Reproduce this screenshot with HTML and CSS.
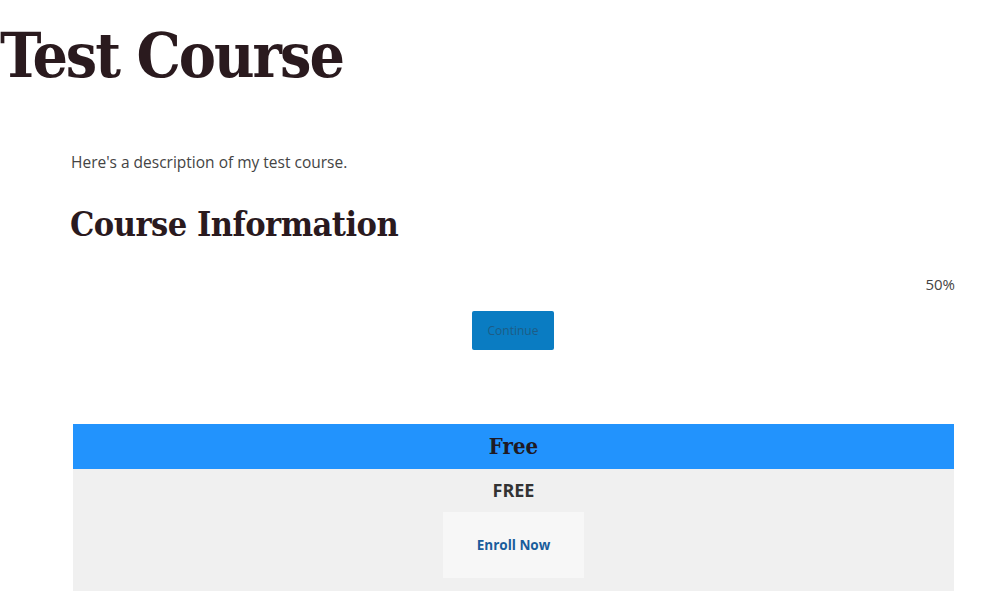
FILE: index.html
```html
<!DOCTYPE html>
<html>
<head>
<meta charset="utf-8">
<link rel="stylesheet" href="styles.css">
</head>
<body>
<h1 class="title">Test Course</h1>
<div class="content">
  <p class="desc">Here's a description of my test course.</p>
  <h2 class="section">Course Information</h2>
  <div class="progress">50%</div>
  <div class="continue-row"><a class="btn-continue">Continue</a></div>
  <div class="pricing">
    <div class="plan-head">Free</div>
    <div class="plan-body">
      <div class="price">FREE</div>
      <a class="enroll">Enroll Now</a>
    </div>
  </div>
</div>
</body>
</html>
```
FILE: styles.css
```css
html, body { margin: 0; padding: 0; background: #fff; }
body { font-family: "Open Sans", Lato, sans-serif; color: #444; width: 1000px; height: 605px; overflow: hidden; }
.title {
  margin: 0; padding-top: 20px;
  font-family: "DejaVu Serif", serif; font-weight: bold; font-stretch: condensed;
  font-size: 62px; line-height: 72px; color: #2a1a1e;
  letter-spacing: -2px;
}
.content { padding: 0 45px 0 71px; }
.desc { margin: 60px 0 0; font-size: 15.5px; line-height: 20px; color: #444; }
.section {
  margin: 32px 0 0 -1px;
  font-family: "DejaVu Serif", serif; font-weight: bold; font-stretch: condensed;
  font-size: 34px; line-height: 40px; color: #2a1a1e; letter-spacing: -0.5px;
}
.progress { margin-top: 30px; text-align: right; font-size: 15px; line-height: 20px; color: #444; }
.continue-row { display: flex; justify-content: center; margin-top: 17px; }
.btn-continue {
  display: block; width: 82px; height: 39px; box-sizing: border-box;
  background: #0a7cc2; border-radius: 2px; color: #1d5c86;
  font-size: 12px; line-height: 39px; text-align: center;
}
.pricing { margin-top: 74px; margin-left: 2px; width: 881px; }
.plan-head {
  background: #2293fd; height: 45px; line-height: 45px; text-align: center;
  font-family: "DejaVu Serif", serif; font-weight: bold; font-stretch: condensed; font-size: 22px; color: #1f1a24;
}
.plan-body { background: #f0f0f0; height: 122px; display: flex; flex-direction: column; align-items: center; }
.price { margin-top: 10px; font-family: "Open Sans", sans-serif; font-weight: bold; font-size: 18px; line-height: 22px; color: #333; }
.enroll {
  display: block; margin-top: 11px; width: 141px; height: 66px; background: #f7f7f7;
  text-align: center; line-height: 66px; font-weight: bold; font-size: 13.5px; color: #1a5d9c;
  font-family: "Open Sans", sans-serif;
}
```
